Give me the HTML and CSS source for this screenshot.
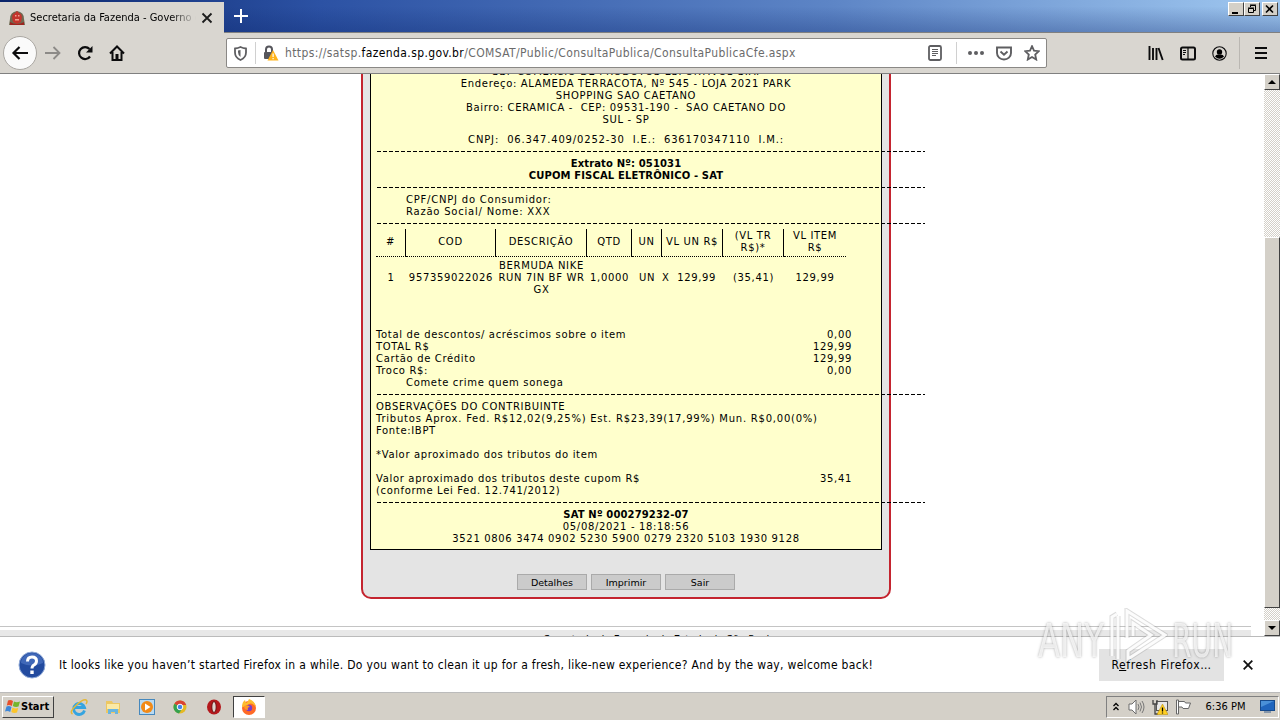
FILE: index.html
```html
<!DOCTYPE html>
<html lang="pt-BR">
<head>
    <meta charset="UTF-8">
    <title>Secretaria da Fazenda - Governo do Estado</title>
    <link rel="stylesheet" href="styles.css">
</head>
<body>

<div class="titlebar">
    <div class="tab">
        <svg class="favicon" width="16" height="16" viewBox="0 0 16 16">
            <path d="M1 9q0-7 7-8 7 1 7 8l1 6H0z" fill="#6e6850"/>
            <path d="M4 4l1.500-.5L8 1l2.500 2.500L12 4l1 3-1 5-4 2-4-2-1-5z" fill="#c3352d"/>
            <path d="M6 5h1.500v1.500H6zM9 5h1.500v1.500H9zM6 9h4v1.500H6z" fill="#f0a090"/>
            <path d="M1 12q7 4 14 0v3H1z" fill="#9d241f"/>
        </svg>
        <span class="tab-title">Secretaria da Fazenda - Governo d</span>
        <svg class="tab-close" width="12" height="12" viewBox="0 0 12 12"><path d="M1.500 1.500l9 9m0-9l-9 9" stroke="#1c1c1c" stroke-width="1.800"/></svg>
    </div>
    <svg class="new-tab" width="14" height="14" viewBox="0 0 14 14"><path d="M7 0v14M0 7h14" stroke="#fff" stroke-width="2"/></svg>
    <div class="window-buttons">
        <span class="win-btn"><svg width="10" height="10" viewBox="0 0 10 10"><path d="M1 8h6v2H1z"/></svg></span>
        <span class="win-btn restore"><svg width="10" height="10" viewBox="0 0 10 10"><path d="M3.500 3V1.500h5v5H7M3 1h6M1.500 4.500h5v4h-5zM1 4h6" fill="none" stroke="#000"/></svg></span>
        <span class="win-btn"><svg width="10" height="10" viewBox="0 0 10 10"><path d="M1 1.500l7 7m0-7l-7 7" stroke="#000" stroke-width="1.600"/></svg></span>
    </div>
</div>

<div class="toolbar">
    <div class="back"><svg width="18" height="16" viewBox="0 0 18 16"><path d="M17 8H2M8.500 2L2.500 8l6 6" fill="none" stroke="#0c0c0d" stroke-width="2.200"/></svg></div>
    <svg class="forward" width="16" height="16" viewBox="0 0 16 16"><path d="M0 8h14M8.500 2l6 6-6 6" fill="none" stroke="#8c8a87" stroke-width="1.800"/></svg>
    <svg class="reload" width="16" height="16" viewBox="0 0 16 16"><path d="M13 11.500A6 6 0 1 1 12.500 4" fill="none" stroke="#0c0c0d" stroke-width="2.200"/><path d="M15.500 1v6.500H9z" fill="#0c0c0d"/></svg>
    <svg class="home" width="16" height="16" viewBox="0 0 16 16"><path d="M1 8.500L8 1.500l7 7M3.500 7v8h9V7" fill="none" stroke="#0c0c0d" stroke-width="2"/><path d="M6.500 9h3v6h-3z" fill="#0c0c0d"/></svg>
    <div class="urlbar">
        <svg class="shield" width="13" height="15" viewBox="0 0 13 15"><path d="M1 2.500Q4 2.300 6.500 1 9 2.300 12 2.500v4q0 5-5.500 7.500Q1 11.500 1 6.500z" fill="none" stroke="#5e5e61" stroke-width="1.800"/><path d="M6.500 4v7Q4 9.500 4 6V4.500z" fill="#5e5e61"/></svg>
        <span class="divider"></span>
        <svg class="lock" width="16" height="16" viewBox="0 0 16 16"><path d="M3 7V4.500a3 3 0 0 1 6 0V7" fill="none" stroke="#56565c" stroke-width="2"/><rect x="1" y="7" width="10" height="7" rx="1" fill="#56565c"/><path d="M10 5l5.500 10.500h-11z" fill="#ffb31a"/><path d="M9.500 8.500h1.200v3.500H9.500zM9.500 13h1.200v1.300H9.500z" fill="#fff"/></svg>
        <span class="url">https://satsp.<b>fazenda.sp.gov.br</b>/COMSAT/Public/ConsultaPublica/ConsultaPublicaCfe.aspx</span>
        <svg class="reader" width="14" height="16" viewBox="0 0 14 16"><rect x="1" y="1" width="12" height="14" rx="1.500" fill="none" stroke="#5e5e61" stroke-width="1.800"/><path d="M4 4.500h6M4 6.500h6M4 8.500h6M4 10.500h4" stroke="#5e5e61"/></svg>
        <span class="divider"></span>
        <svg class="dots" width="16" height="4" viewBox="0 0 16 4"><g fill="#5e5e61"><circle cx="2" cy="2" r="2"/><circle cx="8" cy="2" r="2"/><circle cx="14" cy="2" r="2"/></g></svg>
        <svg class="pocket" width="16" height="15" viewBox="0 0 16 15"><path d="M1 1.500h14V7a7 6.500 0 0 1-14 0z" fill="none" stroke="#5e5e61" stroke-width="1.900"/><path d="M4.500 5.500L8 8.800l3.500-3.300" fill="none" stroke="#5e5e61" stroke-width="1.900"/></svg>
        <svg class="star" width="16" height="16" viewBox="0 0 16 16"><path d="M8 1.200l2 4.500 4.800.5-3.600 3.300 1 5L8 12l-4.200 2.500 1-5L1.200 6.200 6 5.700z" fill="none" stroke="#5e5e61" stroke-width="1.800"/></svg>
    </div>
    <svg class="library" width="16" height="15" viewBox="0 0 16 15"><path d="M1.500 0v14M5 2v12M8.500 2v12M10.500 2l4.200 12" stroke="#0c0c0d" stroke-width="1.900"/></svg>
    <svg class="sidebar-icon" width="16" height="15" viewBox="0 0 16 15"><rect x="1" y="1.500" width="14" height="12" rx="1.500" fill="none" stroke="#0c0c0d" stroke-width="2"/><path d="M8 1v13M3 4.500h3M3 6.500h3M3 8.500h2" stroke="#0c0c0d" stroke-width="1.200"/></svg>
    <svg class="account" width="15" height="15" viewBox="0 0 15 15"><circle cx="7.500" cy="7.500" r="6.700" fill="none" stroke="#0c0c0d" stroke-width="1.100"/><circle cx="7.500" cy="5.900" r="2.700"/><path d="M3 10.500q1-2 3-2h3q2 0 3 2-4.500 4.500-9 0z"/></svg>
    <span class="menu-divider"></span>
    <svg class="menu" width="12" height="12" viewBox="0 0 12 12"><path d="M0 1h12M0 6h12M0 11h12" stroke="#0c0c0d" stroke-width="2"/></svg>
</div>

<div class="viewport">
    <div class="page">
        <div class="panel">
            <div class="receipt">
                <div class="center address">
                    <p>SBF COMERCIO DE PRODUTOS ESPORTIVOS S.A.</p>
                    <p>Endereço: ALAMEDA TERRACOTA, Nº 545 - LOJA 2021 PARK</p>
                    <p>SHOPPING SAO CAETANO</p>
                    <p>Bairro: CERAMICA -&nbsp; CEP: 09531-190 -&nbsp; SAO CAETANO DO</p>
                    <p>SUL - SP</p>
                    <p class="cnpj">CNPJ:&nbsp; 06.347.409/0252-30&nbsp; I.E.:&nbsp; 636170347110&nbsp; I.M.:</p>
                </div>
                <div class="rule"></div>
                <div class="center bold">
                    <p>Extrato Nº: 051031</p>
                    <p>CUPOM FISCAL ELETRÔNICO - SAT</p>
                </div>
                <div class="rule"></div>
                <div class="indent consumer">
                    <p>CPF/CNPJ do Consumidor:</p>
                    <p>Razão Social/ Nome: XXX</p>
                </div>
                <div class="rule"></div>
                <div class="items head">
                    <span>#</span><span>COD</span><span>DESCRIÇÃO</span><span>QTD</span><span>UN</span><span>VL UN R$</span><span>(VL TR<br>R$)*</span><span>VL ITEM<br>R$</span>
                </div>
                <div class="items row">
                    <span>1</span><span>957359022026</span><span>BERMUDA NIKE<br>RUN 7IN BF WR<br>GX</span><span>1,0000</span><span>UN</span><span class="unit-price">X&nbsp; 129,99</span><span>(35,41)</span><span>129,99</span>
                </div>
                <div class="totals">
                    <p><span>Total de descontos/ acréscimos sobre o item</span><span>0,00</span></p>
                    <p><span>TOTAL R$</span><span>129,99</span></p>
                    <p><span>Cartão de Crédito</span><span>129,99</span></p>
                    <p><span>Troco R$:</span><span>0,00</span></p>
                </div>
                <p class="indent">Comete crime quem sonega</p>
                <div class="rule"></div>
                <p>OBSERVAÇÕES DO CONTRIBUINTE</p>
                <p class="tributes">Tributos Aprox. Fed. R$12,02(9,25%) Est. R$23,39(17,99%) Mun. R$0,00(0%)</p>
                <p>Fonte:IBPT</p>
                <p class="spaced">*Valor aproximado dos tributos do item</p>
                <div class="totals taxes">
                    <p><span>Valor aproximado dos tributos deste cupom R$</span><span>35,41</span></p>
                </div>
                <p>(conforme Lei Fed. 12.741/2012)</p>
                <div class="rule"></div>
                <div class="center">
                    <p class="bold">SAT Nº 000279232-07</p>
                    <p>05/08/2021 - 18:18:56</p>
                    <p>3521 0806 3474 0902 5230 5900 0279 2320 5103 1930 9128</p>
                </div>
            </div>
            <div class="actions">
                <button>Detalhes</button>
                <button>Imprimir</button>
                <button>Sair</button>
            </div>
        </div>
        <div class="page-footer">Secretaria da Fazenda do Estado de São Paulo</div>
    </div>
    <div class="scrollbar">
        <span class="scroll-btn"><svg width="8" height="4" viewBox="0 0 8 4"><path d="M0 4l4-4 4 4z"/></svg></span>
        <span class="scroll-thumb"></span>
        <span class="scroll-btn"><svg width="8" height="4" viewBox="0 0 8 4"><path d="M0 0l4 4 4-4z"/></svg></span>
    </div>
</div>

<div class="notification">
    <svg class="help" width="28" height="28" viewBox="0 0 28 28"><circle cx="14" cy="14" r="13" fill="#234b9f" stroke="#8fa9d7"/><path d="M3 12a11 10 0 0 1 22 0q-11 5-22 0z" fill="#4068b8"/><path d="M9.500 10.500q0-4.500 4.500-4.500t4.500 4q0 2.500-2.500 4-2 1-2 3.500" fill="none" stroke="#fff" stroke-width="3"/><rect x="12.300" y="19.500" width="3.400" height="3.500" fill="#fff"/></svg>
    <span class="message">It looks like you haven’t started Firefox in a while. Do you want to clean it up for a fresh, like-new experience? And by the way, welcome back!</span>
    <span class="refresh">R<u>e</u>fresh Firefox…</span>
    <svg class="dismiss" width="10" height="10" viewBox="0 0 10 10"><path d="M.7.700l8.600 8.600m0-8.600L.7 9.300" stroke="#111" stroke-width="1.800"/></svg>
</div>

<div class="taskbar">
    <div class="start">
        <svg width="16" height="15" viewBox="0 0 16 15"><path d="M3 1.500q2.500-1 5 .5L6.800 7q-2.500-1.500-5-.5z" fill="#e8502a"/><path d="M9 2.500q2.500 1.500 6 0l-1.500 5q-3 1-5.700-.5z" fill="#74b52c"/><path d="M1.500 7.500q2.500-1 5 .5l-1.300 5Q2.700 11.500 0 12.500z" fill="#3e87d8"/><path d="M7.500 8.500q2.800 1.500 5.700.5L12 13.500q-3 1-5.700-.5z" fill="#fcc52a"/></svg>
        <b>Start</b>
    </div>
    <div class="tasks">
        <svg width="18" height="18" viewBox="0 0 18 18"><path d="M14.500 12.500A5.500 5.500 0 1 1 14.500 9.500H5" fill="none" stroke="#35a4e0" stroke-width="2.800"/><path d="M2.500 16Q-1 14 6 7.500t10-5.500q2 1 0 4" fill="none" stroke="#e5b835" stroke-width="1.500"/></svg>
        <svg width="18" height="18" viewBox="0 0 18 18"><path d="M2 3h6l1 2h7v10H2z" fill="#ecc763"/><path d="M3 6h12v5H3z" fill="#fae9a5"/><path d="M4 16v-5h10v5h-3v-2H7v2z" fill="#69b5df"/></svg>
        <svg width="18" height="18" viewBox="0 0 18 18"><rect x="1.500" y="1.500" width="15" height="15" fill="#b9daf2" stroke="#4688bd"/><circle cx="9" cy="9" r="6" fill="#f28a17"/><path d="M7 5.500l5.500 3.500L7 12.500z" fill="#fff"/></svg>
        <svg width="18" height="18" viewBox="0 0 18 18"><circle cx="9" cy="9" r="6.500" fill="#e5b923"/><path d="M9 9L3.400 5.700a6.500 6.500 0 0 1 11.800 1.300H9z" fill="#d94334"/><path d="M9 9L3.400 5.700A6.500 6.500 0 0 0 8 15.500L11 11z" fill="#35a14e"/><circle cx="9" cy="9" r="2.800" fill="#4284e8" stroke="#fff"/></svg>
        <svg width="18" height="18" viewBox="0 0 18 18"><ellipse cx="9" cy="9" rx="7" ry="7.500" fill="#b4181c"/><ellipse cx="9" cy="9" rx="2.200" ry="5.500" fill="#ddd6d0" stroke="#6c0c0e"/></svg>
    </div>
    <div class="task-active">
        <svg width="18" height="18" viewBox="0 0 18 18"><circle cx="9" cy="10" r="7" fill="#ff6a26"/><path d="M2 9Q2 4 5 2l1 3q2-1 3-4 6 2 7 8-4-5-7-3T3 9z" fill="#ffbd2e"/><circle cx="9" cy="10" r="3.200" fill="#7b3cc9"/><path d="M4 8q4-2 6 1-3 0-2 3-4 0-4-4z" fill="#ff9a22"/></svg>
    </div>
    <div class="tray">
        <svg class="chevrons" width="6" height="9" viewBox="0 0 6 9"><path d="M.5 4L3 1.500 5.500 4M.5 8L3 5.500 5.500 8" fill="none" stroke="#000" stroke-width="1.300"/></svg>
        <svg class="speaker" width="17" height="16" viewBox="0 0 17 16"><path d="M1 5h3l4-4v14l-4-4H1z" fill="#fff" stroke="#6c6c6c"/><path d="M10 5q2 3 0 6M12 3.500q3 4.500 0 9M14 2q4 6 0 12" fill="none" stroke="#777"/></svg>
        <svg class="network" width="16" height="16" viewBox="0 0 16 16"><rect x="4.500" y="2.500" width="11" height="9" fill="#e8e8e8" stroke="#555"/><path d="M1 1v4h4V1M3 5v10h3" fill="none" stroke="#444" stroke-width="1.300"/><path d="M10.500 5l5.500 10.500H5z" fill="#ffcf22" stroke="#b58b00" stroke-width=".5"/><path d="M10.500 8.500v4M10.500 13.500v1" stroke="#000" stroke-width="1.300"/></svg>
        <svg class="flag" width="16" height="16" viewBox="0 0 16 16"><path d="M1.500 1h2v14h-2zM3.500 2.500h6l1 1.500h5l-2 5.500H8L7 8H3.500z" fill="#fff" stroke="#666"/></svg>
        <span class="clock">6:36 PM</span>
        <svg class="desktop" width="15" height="13" viewBox="0 0 15 13"><rect x=".5" y=".5" width="14" height="10" fill="#2065bd" stroke="#164a8c"/><path d="M1 1h13L1 7z" fill="#4a90d8"/><path d="M4 12h7" stroke="#3a5f8c"/></svg>
    </div>
</div>

<div class="watermark">
    <span class="any">ANY</span>
    <svg width="60" height="60" viewBox="0 0 60 60"><path d="M4 48V9l5-3M10 51V8M19 30V3l38 24-37 24v-8l23-16-18-12v13" fill="none" stroke="#999" stroke-opacity=".35" stroke-width="5"/><path d="M4 48V9l5-3M10 51V8M19 30V3l38 24-37 24v-8l23-16-18-12v13" fill="none" stroke="#fff" stroke-opacity=".9" stroke-width="3"/></svg>
    <span class="run">RUN</span>
</div>

</body>
</html>
```

FILE: styles.css
```css
* {
    box-sizing: border-box;
}
body {
    margin: 0;
    width: 1280px;
    height: 720px;
    overflow: hidden;
    position: relative;
    display: flex;
    flex-direction: column;
    background: #fff;
    color: #000;
    font: 12px "DejaVu Sans Condensed", "DejaVu Sans", sans-serif;
}
p {
    margin: 0;
}
svg {
    display: block;
    flex: none;
}

/* browser window */
.titlebar {
    height: 33px;
    flex: none;
    display: flex;
    background: linear-gradient(to bottom, rgba(10, 36, 106, 0) 20%, rgba(10, 36, 106, 0.3)), linear-gradient(to right, #0a246a, #2c52a4 25%, #5d85c6 65%, #a0c8f0);
    border-bottom: 1px solid #808080;
}
.tab {
    width: 224px;
    height: 31px;
    margin-top: 2px;
    padding: 0 11px 0 9px;
    display: flex;
    align-items: center;
    background: #d9d6d0;
}
.tab-title {
    flex: 1;
    margin: 0 5px;
    white-space: nowrap;
    overflow: hidden;
    font-size: 11px;
    mask-image: linear-gradient(to right, #000 85%, transparent);
}
.new-tab {
    margin: 9px 0 0 10px;
}
.window-buttons {
    display: flex;
    margin: 2px 2px 0 auto;
}
.win-btn {
    width: 16px;
    height: 14px;
    display: flex;
    align-items: center;
    justify-content: center;
    background: #d4d0c8;
    border: 1px solid;
    border-color: #fff #404040 #404040 #fff;
}
.win-btn.restore {
    margin-right: 2px;
}
.toolbar {
    height: 41px;
    flex: none;
    display: flex;
    align-items: center;
    padding: 0 13px 0 3px;
    background: #d9d6d0;
    border-bottom: 1px solid #808080;
}
.back {
    width: 34px;
    height: 34px;
    display: flex;
    align-items: center;
    justify-content: center;
    background: #fafafa;
    border: 1px solid #aaa7a2;
    border-radius: 50%;
}
.forward {
    margin-left: 8px;
}
.reload, .home {
    margin-left: 16px;
}
.urlbar {
    width: 821px;
    height: 30px;
    margin-left: 101px;
    display: flex;
    align-items: center;
    padding: 0 6px 0 7px;
    background: #fff;
    border: 1px solid #8a8885;
    border-radius: 2px;
}
.divider {
    width: 1px;
    height: 22px;
    margin: 0 7px 0 8px;
    background: #d0d0d0;
}
.url {
    flex: 1;
    margin-left: 6px;
    color: #6b6b6b;
    letter-spacing: 0.39px;
    white-space: nowrap;
}
.url b {
    color: #000;
    font-weight: normal;
}
.reader {
    margin-right: 1px;
    transform: translateX(-5px);
}
.dots {
    margin-left: 4px;
}
.pocket, .star {
    margin-left: 12px;
}
.library {
    margin-left: auto;
}
.sidebar-icon, .account {
    margin-left: 16px;
}
.menu-divider {
    width: 1px;
    height: 32px;
    margin: 0 15px 0 12px;
    background: #bab7b2;
}

/* page */
.viewport {
    height: 562px;
    flex: none;
    display: flex;
    overflow: hidden;
}
.page {
    width: 1251px;
    height: 562px;
    overflow: hidden;
}
.panel {
    width: 530px;
    height: 545px;
    margin: -20px 0 0 361px;
    padding: 0 7px;
    background: #e4e4e4;
    border: 2px solid #c4242f;
    border-radius: 10px;
}
.receipt {
    width: 512px;
    height: 494px;
    padding: 9px 5px 0;
    background: #ffffcc;
    border: 1px solid #000;
    font: 10px/12px "DejaVu Sans", Verdana, sans-serif;
    letter-spacing: 0.66px;
    white-space: nowrap;
}
.center {
    text-align: center;
}
.bold {
    font-weight: bold;
    letter-spacing: 0.14px;
}
.cnpj {
    margin-top: 8px;
    letter-spacing: 0.84px;
}
.rule {
    width: 549px;
    height: 12px;
    background: repeating-linear-gradient(to right, #000 0 4px, transparent 4px 6px) 1px 5px / 100% 1px no-repeat;
}
.indent {
    padding-left: 30px;
}
.consumer {
    letter-spacing: 0.78px;
}
.items {
    display: grid;
    grid-template-columns: 30px 90px 91px 45px 30px 61px 61px 62px;
    text-align: center;
}
.items span {
    display: flex;
    align-items: center;
    justify-content: center;
}
.head {
    margin-top: -1px;
}
.head span {
    height: 28px;
    padding-bottom: 2px;
    border-right: 1px solid #000;
    border-bottom: 1px dotted #000;
}
.head span:last-child {
    border-right: none;
}
.row {
    margin-top: 3px;
}
.unit-price {
    padding-right: 7px;
}
.totals {
    width: 476px;
    margin-top: 33px;
}
.totals p {
    display: flex;
    justify-content: space-between;
}
.tributes {
    letter-spacing: 0.77px;
}
.spaced, .taxes {
    margin-top: 12px;
}
.actions {
    display: flex;
    justify-content: center;
    gap: 4px;
    margin-top: 24px;
}
.actions button {
    width: 70px;
    height: 16px;
    padding: 1px 0 0;
    background: #cbcbcb;
    border: 1px solid #aaa;
    font: 9.5px/14px "DejaVu Sans", Verdana, sans-serif;
    color: #000;
}
.page-footer {
    margin-top: 27px;
    padding: 7px 0 0 68px;
    border-top: 1px solid #c4c4c4;
    text-align: center;
    font: 10px/12px "DejaVu Sans", Verdana, sans-serif;
    background: linear-gradient(#e8e8e8, #e8e8e8) 0 3px / 100% 6px no-repeat;
}
.scrollbar {
    width: 16px;
    margin-left: auto;
    display: flex;
    flex-direction: column;
    background: repeating-conic-gradient(#d4d0c8 0 25%, #fff 0 50%) 0 0 / 2px 2px;
}
.scroll-btn {
    height: 16px;
    display: flex;
    align-items: center;
    justify-content: center;
    background: #d4d0c8;
    border: 1px solid;
    border-color: #fff #404040 #404040 #fff;
}
.scroll-thumb {
    height: 371px;
    margin: 147px 0 12px;
    background: #d4d0c8;
    border: 1px solid;
    border-color: #fff #404040 #404040 #fff;
}

/* notification bar */
.notification {
    height: 57px;
    flex: none;
    display: flex;
    align-items: center;
    padding: 0 27px 0 18px;
    background: #fff;
    border-top: 1px solid #bbb;
    border-bottom: 1px solid #bbb;
    letter-spacing: 0.31px;
}
.message {
    margin-left: 13px;
    white-space: nowrap;
}
.refresh {
    width: 125px;
    height: 32px;
    margin-left: auto;
    background: #e3e3e3;
    letter-spacing: 0.6px;
    line-height: 32px;
    text-align: center;
}
.dismiss {
    margin-left: 19px;
}

/* taskbar */
.taskbar {
    height: 27px;
    flex: none;
    display: flex;
    align-items: center;
    padding: 0 1px 0 2px;
    background: #d4d0c8;
}
.start {
    width: 52px;
    height: 22px;
    padding-left: 2px;
    display: flex;
    align-items: center;
    border: 1px solid;
    border-color: #fff #404040 #404040 #fff;
    font-size: 11px;
}
.tasks {
    width: 153px;
    margin: 0 9px 0 16px;
    display: flex;
    justify-content: space-between;
}
.task-active {
    width: 32px;
    height: 22px;
    margin-left: 1px;
    display: flex;
    align-items: center;
    justify-content: center;
    background: #fff;
    border: 1px solid;
    border-color: #404040 #fff #fff #404040;
}
.tray {
    width: 173px;
    height: 22px;
    margin-left: auto;
    padding: 0 3px 0 6px;
    display: flex;
    align-items: center;
    border: 1px solid;
    border-color: #808080 #fff #fff #808080;
}
.speaker {
    margin-left: 9px;
}
.network, .flag {
    margin-left: 7px;
}
.clock {
    margin: 0 auto;
    font-size: 11px;
}

.watermark {
    position: absolute;
    left: 1038px;
    top: 608px;
    width: 194px;
    display: flex;
    align-items: flex-start;
    justify-content: space-between;
    color: rgba(255, 255, 255, 0.75);
    font: 46px/66px "DejaVu Sans Condensed", sans-serif;
    text-shadow: 0 0 3px rgba(0, 0, 0, 0.35);
}
.any, .run {
    width: 66px;
    transform: scaleX(0.78);
    transform-origin: left;
}
.run {
    width: 60px;
    transform: scaleX(0.68);
}
```
